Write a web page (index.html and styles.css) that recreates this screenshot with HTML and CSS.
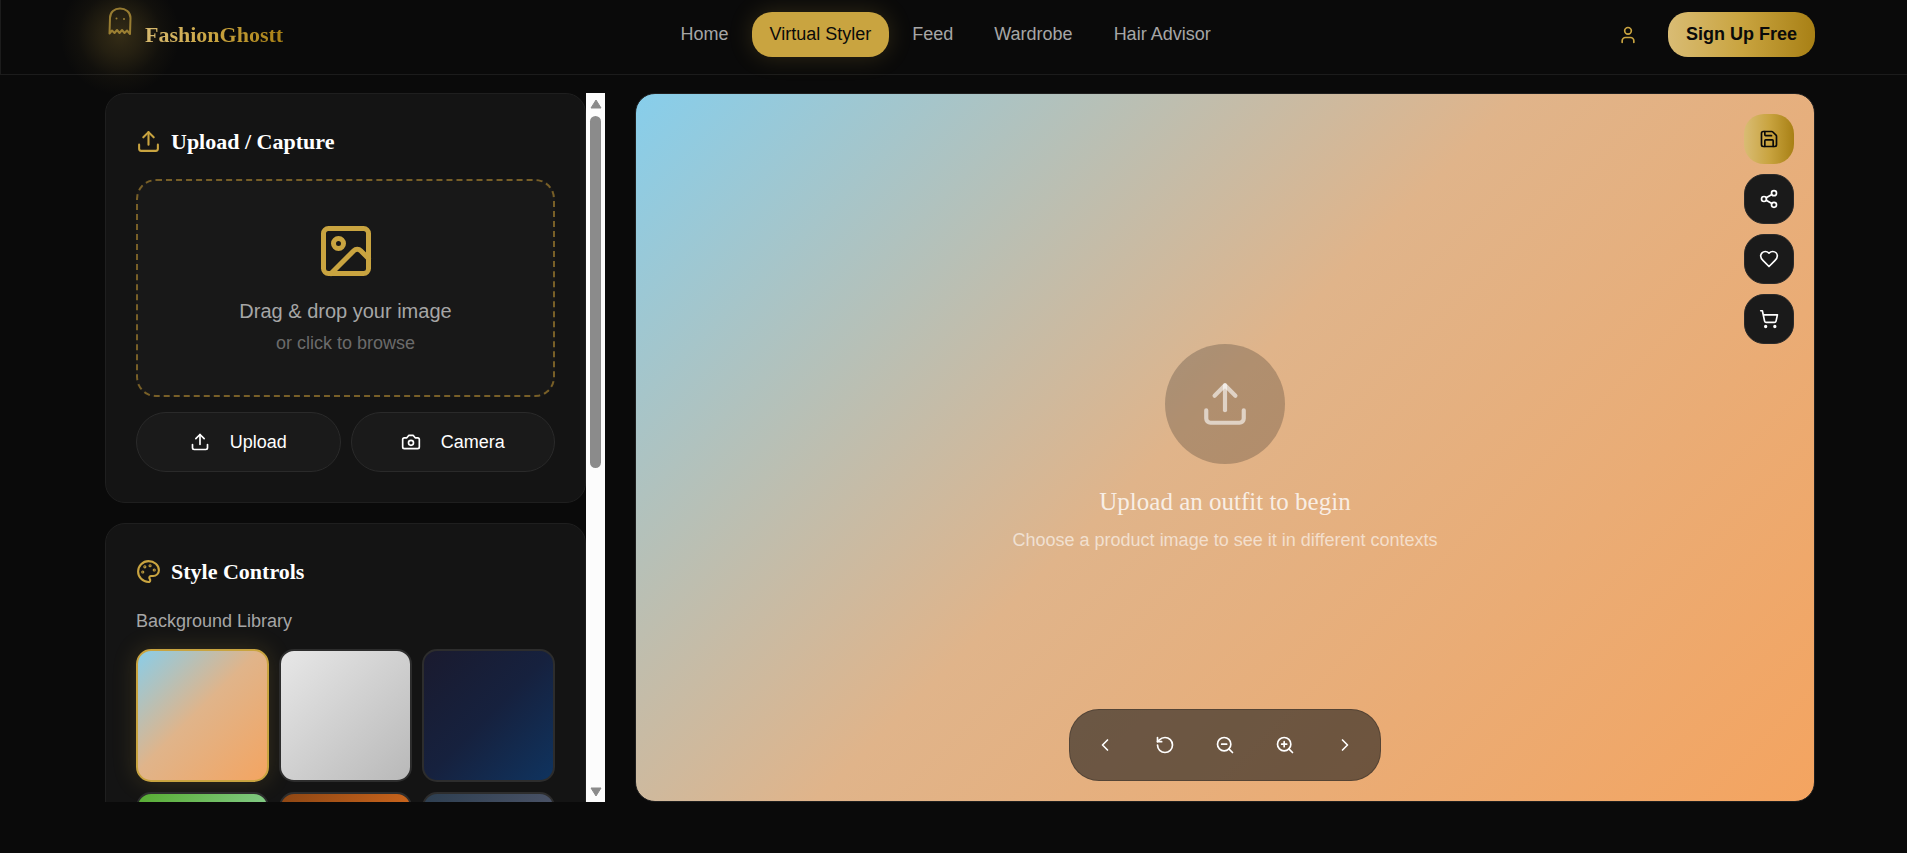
FILE: index.html
```html
<!DOCTYPE html>
<html lang="en">
<head>
    <meta charset="utf-8">
    <title>FashionGhostt - Virtual Styler</title>
    <meta name="viewport" content="width=device-width, initial-scale=1">
    <link rel="stylesheet" href="styles.css">
</head>
<body>
    <!-- Shared icons -->
    <svg class="icon-defs" aria-hidden="true">
        <symbol id="icon-upload" viewBox="0 0 24 24">
            <path d="M21 15v4a2 2 0 0 1-2 2H5a2 2 0 0 1-2-2v-4"/>
            <path d="M17 8l-5-5-5 5"/>
            <path d="M12 3v12"/>
        </symbol>
    </svg>

    <header class="header">
        <a href="#" class="logo">
            <span class="logo-icon">
                <svg class="ghost" viewBox="0 0 24 28">
                    <path d="M1.500 26.500L2 11C2 5 6.500 1.500 12 1.500S22.500 5 22.500 11l-.5 16-3-3.500-2.500 2.500-2.500-3-2.500 3-2.500-3-2.500 3-2.500-2.500z"/>
                    <circle cx="8.500" cy="11.500" r="1"/>
                    <circle cx="16" cy="12" r="1"/>
                </svg>
            </span>
            <span class="logo-text">FashionGhostt</span>
        </a>
        <nav class="nav">
            <a href="#" class="nav-link">Home</a>
            <a href="#" class="nav-link active">Virtual Styler</a>
            <a href="#" class="nav-link">Feed</a>
            <a href="#" class="nav-link">Wardrobe</a>
            <a href="#" class="nav-link">Hair Advisor</a>
        </nav>
        <div class="header-actions">
            <button class="profile-btn" aria-label="Profile">
                <svg class="icon" viewBox="0 0 24 24"><path d="M19 21v-2a4 4 0 0 0-4-4H9a4 4 0 0 0-4 4v2"/><circle cx="12" cy="7" r="4"/></svg>
            </button>
            <button class="signup-btn">Sign Up Free</button>
        </div>
    </header>

    <main class="workspace">
        <aside class="sidebar">
            <div class="sidebar-content">
                <section class="card">
                    <h2 class="card-title">
                        <svg class="icon"><use href="#icon-upload"/></svg>
                        Upload / Capture
                    </h2>
                    <div class="dropzone">
                        <svg class="icon" viewBox="0 0 24 24"><rect x="3" y="3" width="18" height="18" rx="2"/><circle cx="9" cy="9" r="2"/><path d="M21 15l-3.1-3.1a2 2 0 0 0-2.8 0L6 21"/></svg>
                        <p class="dropzone-text">Drag &amp; drop your image</p>
                        <p class="dropzone-hint">or click to browse</p>
                    </div>
                    <div class="upload-actions">
                        <button class="upload-btn">
                            <svg class="icon"><use href="#icon-upload"/></svg>
                            Upload
                        </button>
                        <button class="upload-btn">
                            <svg class="icon" viewBox="0 0 24 24"><path d="M14.5 4h-5L7 7H4a2 2 0 0 0-2 2v9a2 2 0 0 0 2 2h16a2 2 0 0 0 2-2V9a2 2 0 0 0-2-2h-3z"/><circle cx="12" cy="13" r="3"/></svg>
                            Camera
                        </button>
                    </div>
                </section>

                <section class="card">
                    <h2 class="card-title">
                        <svg class="icon" viewBox="0 0 24 24"><circle cx="13.5" cy="6.5" r=".5"/><circle cx="17.5" cy="10.5" r=".5"/><circle cx="8.5" cy="7.5" r=".5"/><circle cx="6.5" cy="12.5" r=".5"/><path d="M12 2C6.5 2 2 6.5 2 12s4.500 10 10 10c.926 0 1.648-.746 1.648-1.688 0-.437-.18-.835-.437-1.125-.29-.289-.438-.652-.438-1.125a1.640 1.640 0 0 1 1.668-1.668h1.996c3.051 0 5.555-2.503 5.555-5.554C21.965 6.012 17.461 2 12 2z"/></svg>
                        Style Controls
                    </h2>
                    <h3 class="control-label">Background Library</h3>
                    <div class="backgrounds">
                        <button class="swatch sunset active" aria-label="Sunset"></button>
                        <button class="swatch studio" aria-label="Studio"></button>
                        <button class="swatch night" aria-label="Night"></button>
                        <button class="swatch garden" aria-label="Garden"></button>
                        <button class="swatch autumn" aria-label="Autumn"></button>
                        <button class="swatch urban" aria-label="Urban"></button>
                    </div>
                </section>
            </div>
            <div class="scrollbar" aria-hidden="true">
                <svg class="scroll-arrow" viewBox="0 0 12 10"><path d="M6 1l5 8H1z"/></svg>
                <div class="scroll-track">
                    <div class="scroll-thumb"></div>
                </div>
                <svg class="scroll-arrow" viewBox="0 0 12 10"><path d="M6 9L1 1h10z"/></svg>
            </div>
        </aside>

        <section class="preview sunset">
            <div class="placeholder">
                <div class="placeholder-icon">
                    <svg class="icon"><use href="#icon-upload"/></svg>
                </div>
                <h3 class="placeholder-title">Upload an outfit to begin</h3>
                <p class="placeholder-text">Choose a product image to see it in different contexts</p>
            </div>

            <div class="preview-actions">
                <button class="action-btn primary" aria-label="Save">
                    <svg class="icon" viewBox="0 0 24 24"><path d="M15.200 3a2 2 0 0 1 1.400.6l3.800 3.800a2 2 0 0 1 .6 1.400V19a2 2 0 0 1-2 2H5a2 2 0 0 1-2-2V5a2 2 0 0 1 2-2z"/><path d="M17 21v-7a1 1 0 0 0-1-1H8a1 1 0 0 0-1 1v7"/><path d="M7 3v4a1 1 0 0 0 1 1h7"/></svg>
                </button>
                <button class="action-btn" aria-label="Share">
                    <svg class="icon" viewBox="0 0 24 24"><circle cx="18" cy="5" r="3"/><circle cx="6" cy="12" r="3"/><circle cx="18" cy="19" r="3"/><path d="M8.590 13.510l6.830 3.980M15.410 6.510l-6.820 3.980"/></svg>
                </button>
                <button class="action-btn" aria-label="Like">
                    <svg class="icon" viewBox="0 0 24 24"><path d="M19 14c1.490-1.460 3-3.210 3-5.500A5.500 5.500 0 0 0 16.500 3c-1.760 0-3 .5-4.500 2-1.500-1.500-2.740-2-4.500-2A5.500 5.500 0 0 0 2 8.500c0 2.300 1.500 4.050 3 5.500l7 7z"/></svg>
                </button>
                <button class="action-btn" aria-label="Add to cart">
                    <svg class="icon" viewBox="0 0 24 24"><circle cx="8" cy="21" r="1"/><circle cx="19" cy="21" r="1"/><path d="M2.050 2.050h2l2.660 12.420a2 2 0 0 0 2 1.580h9.780a2 2 0 0 0 1.950-1.570l1.650-7.430H5.120"/></svg>
                </button>
            </div>

            <div class="toolbar">
                <button class="tool-btn" aria-label="Previous">
                    <svg class="icon" viewBox="0 0 24 24"><path d="M15 18l-6-6 6-6"/></svg>
                </button>
                <button class="tool-btn" aria-label="Reset">
                    <svg class="icon" viewBox="0 0 24 24"><path d="M3 12a9 9 0 1 0 9-9 9.750 9.750 0 0 0-6.740 2.740L3 8"/><path d="M3 3v5h5"/></svg>
                </button>
                <button class="tool-btn" aria-label="Zoom out">
                    <svg class="icon" viewBox="0 0 24 24"><circle cx="11" cy="11" r="8"/><path d="M21 21l-4.350-4.350M8 11h6"/></svg>
                </button>
                <button class="tool-btn" aria-label="Zoom in">
                    <svg class="icon" viewBox="0 0 24 24"><circle cx="11" cy="11" r="8"/><path d="M21 21l-4.350-4.350M11 8v6M8 11h6"/></svg>
                </button>
                <button class="tool-btn" aria-label="Next">
                    <svg class="icon" viewBox="0 0 24 24"><path d="M9 18l6-6-6-6"/></svg>
                </button>
            </div>
        </section>
    </main>
</body>
</html>
```

FILE: styles.css
```css
:root {
    --gold: #c9a440;
    --gold-gradient: linear-gradient(90deg, #d9bc74, #c9a440 50%, #a88015);
    --bg: #0a0a0a;
    --card: #141414;
    --surface: #1a1a1a;
    --muted: #a6a6a6;
}
* {
    box-sizing: border-box;
    margin: 0;
    padding: 0;
}
body {
    min-height: 100vh;
    background: var(--bg);
    color: #fff;
    font-family: "Liberation Sans", Arial, sans-serif;
    font-size: 18px;
    line-height: 24px;
    overflow: hidden;
}
a {
    color: inherit;
    text-decoration: none;
}
button {
    border: none;
    background: none;
    color: inherit;
    font: inherit;
    cursor: pointer;
}
.icon-defs {
    display: none;
}
.icon {
    display: block;
    flex: none;
    width: 20px;
    height: 20px;
    fill: none;
    stroke: currentColor;
    stroke-width: 2;
    stroke-linecap: round;
    stroke-linejoin: round;
}

/* Header */
.header {
    display: flex;
    justify-content: space-between;
    align-items: center;
    padding: 12px 92px 17px 104px;
    border-left: 1px solid #1c1c1c;
    border-bottom: 1px solid #1c1c1c;
}
.logo {
    display: flex;
    align-items: center;
    gap: 10px;
}
.logo-icon {
    position: relative;
    width: 30px;
    height: 30px;
}
.logo-icon::before {
    content: "";
    position: absolute;
    inset: -45px;
    border-radius: 50%;
    background: radial-gradient(closest-side, rgba(201, 164, 64, 0.22), rgba(201, 164, 64, 0.14) 35%, rgba(201, 164, 64, 0.04) 70%, transparent);
}
.ghost {
    position: absolute;
    top: -13px;
    left: 3px;
    width: 24px;
    height: 28px;
    fill: none;
    stroke: var(--gold);
    stroke-width: 2;
    stroke-linejoin: round;
    opacity: 0.7;
}
.ghost circle {
    fill: var(--gold);
    stroke: none;
}
.logo-text {
    background: var(--gold-gradient);
    background-clip: text;
    -webkit-background-clip: text;
    color: transparent;
    font-family: "Liberation Serif", "Times New Roman", serif;
    font-size: 22px;
    font-weight: bold;
}
.nav {
    display: flex;
    gap: 5px;
}
.nav-link {
    padding: 10px 18px 11px;
    border-radius: 20px;
    color: var(--muted);
}
.nav-link.active {
    background: var(--gold);
    color: var(--bg);
    box-shadow: 0 0 25px rgba(201, 164, 64, 0.2);
}
.header-actions {
    display: flex;
    align-items: center;
    gap: 20px;
}
.profile-btn {
    padding: 10px;
    color: var(--gold);
}
.signup-btn {
    padding: 10px 18px 11px;
    border-radius: 20px;
    background: var(--gold-gradient);
    color: var(--bg);
    font-weight: bold;
}

/* Layout */
.workspace {
    display: grid;
    grid-template-columns: 500px 1fr;
    gap: 30px;
    height: calc(100vh - 126px);
    padding: 18px 92px 0 105px;
}
.sidebar {
    display: flex;
    min-height: 0;
}
.sidebar-content {
    flex: 1;
    display: flex;
    flex-direction: column;
    gap: 20px;
    overflow: hidden;
}
.scrollbar {
    display: flex;
    flex-direction: column;
    align-items: center;
    gap: 7px;
    width: 19px;
    padding: 6px 0 5px;
    background: #fcfcfc;
}
.scroll-arrow {
    width: 12px;
    height: 10px;
    fill: #8b8b8b;
    stroke: #8b8b8b;
    stroke-width: 1;
    stroke-linejoin: round;
}
.scroll-track {
    flex: 1;
    width: 11px;
}
.scroll-thumb {
    height: 53%;
    border-radius: 6px;
    background: #8b8b8b;
}

/* Sidebar cards */
.card {
    flex: none;
    padding: 30px;
    background: var(--card);
    border: 1px solid #1f1f1f;
    border-radius: 20px;
}
.card-title {
    display: flex;
    align-items: center;
    gap: 10px;
    margin-bottom: 20px;
    font-family: "Liberation Serif", "Times New Roman", serif;
    font-size: 22px;
    line-height: 35px;
}
.card-title .icon {
    width: 25px;
    height: 25px;
    color: var(--gold);
}
.dropzone {
    display: flex;
    flex-direction: column;
    align-items: center;
    padding: 40px;
    border: 2px dashed #785f27;
    border-radius: 20px;
    background: #181818;
    cursor: pointer;
}
.dropzone .icon {
    width: 60px;
    height: 60px;
    margin-bottom: 15px;
    color: var(--gold);
}
.dropzone-text {
    margin-bottom: 5px;
    color: var(--muted);
    font-size: 20px;
    line-height: 30px;
}
.dropzone-hint {
    color: #6b6b6b;
    line-height: 24px;
}
.upload-actions {
    display: grid;
    grid-template-columns: 1fr 1fr;
    gap: 10px;
    margin-top: 15px;
}
.upload-btn {
    display: flex;
    justify-content: center;
    align-items: center;
    gap: 20px;
    height: 60px;
    border: 1px solid #2a2a2a;
    border-radius: 30px;
    background: var(--surface);
}
.control-label {
    margin-bottom: 16px;
    color: var(--muted);
    font-size: 18px;
    font-weight: normal;
}
.backgrounds {
    display: grid;
    grid-template-columns: repeat(3, 1fr);
    gap: 10px;
}
.swatch {
    aspect-ratio: 1;
    border: 2px solid #2d2d2d;
    border-radius: 15px;
    background-origin: border-box;
}
.swatch.active {
    border-color: var(--gold);
    box-shadow: 0 0 25px rgba(201, 164, 64, 0.2);
}
.sunset {
    background-image: linear-gradient(135deg, #87ceeb 0%, #e0b48a 47%, #f4a460 100%);
}
.studio {
    background-image: linear-gradient(135deg, #e8e8e8, #b8b8b8);
}
.night {
    background-image: linear-gradient(135deg, #1a1a2e 0%, #16213e 50%, #0f3460 100%);
}
.garden {
    background-image: linear-gradient(135deg, #56ab2f, #a8e6cf);
}
.autumn {
    background-image: linear-gradient(135deg, #8b4513, #ff7f24);
}
.urban {
    background-image: linear-gradient(135deg, #2c3e50, #636379);
}

/* Preview */
.preview {
    position: relative;
    display: flex;
    justify-content: center;
    align-items: center;
    border: 1px solid #1f1f1f;
    border-radius: 20px;
}
.placeholder {
    display: flex;
    flex-direction: column;
    align-items: center;
    text-align: center;
}
.placeholder-icon {
    padding: 35px;
    margin-bottom: 20px;
    border-radius: 50%;
    background: rgba(26, 26, 26, 0.24);
    color: rgba(255, 255, 255, 0.6);
}
.placeholder-icon .icon {
    width: 50px;
    height: 50px;
}
.placeholder-title {
    margin-bottom: 8px;
    color: rgba(255, 255, 255, 0.8);
    font-family: "Liberation Serif", "Times New Roman", serif;
    font-size: 25px;
    font-weight: normal;
    line-height: 36px;
}
.placeholder-text {
    color: rgba(255, 255, 255, 0.6);
}
.preview-actions {
    position: absolute;
    top: 20px;
    right: 20px;
    display: flex;
    flex-direction: column;
    gap: 10px;
}
.action-btn, .tool-btn {
    display: flex;
    justify-content: center;
    align-items: center;
    width: 50px;
    height: 50px;
    border-radius: 20px;
}
.action-btn {
    border: 1px solid #2a2a2a;
    background: var(--surface);
}
.action-btn.primary {
    border: none;
    background: var(--gold-gradient);
    color: var(--bg);
}
.toolbar {
    position: absolute;
    bottom: 20px;
    left: 50%;
    transform: translateX(-50%);
    display: flex;
    gap: 10px;
    padding: 10px;
    border: 1px solid rgba(26, 26, 26, 0.3);
    border-radius: 30px;
    background: rgba(26, 26, 26, 0.6);
}
```
